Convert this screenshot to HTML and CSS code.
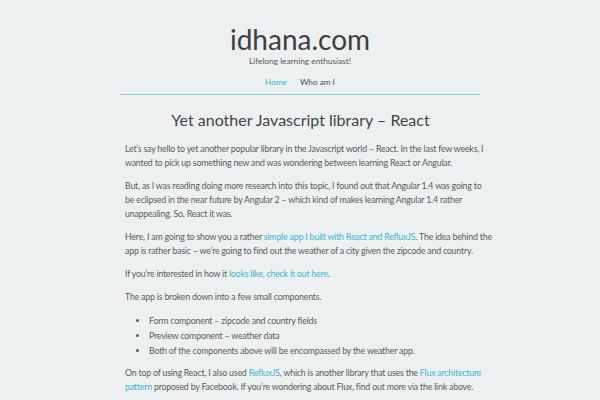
FILE: index.html
```html
<!DOCTYPE html>
<html>
<head>
<meta charset="utf-8">
<link rel="stylesheet" href="styles.css">
</head>
<body>
<div class="page">
  <header class="site-header">
    <h1 class="site-title">idhana.com</h1>
    <p class="tagline">Lifelong learning enthusiast!</p>
    <nav class="nav">
      <a class="nav-item active" href="#">Home</a>
      <a class="nav-item" href="#">Who am I</a>
    </nav>
  </header>
  <article class="post">
    <h2 class="post-title">Yet another Javascript library – React</h2>
    <p>Let’s say hello to yet another popular library in the Javascript world – React. In the last few weeks, I<br>wanted to pick up something new and was wondering between learning React or Angular.</p>
    <p>But, as I was reading doing more research into this topic, I found out that Angular 1.4 was going to<br>be eclipsed in the near future by Angular 2 – which kind of makes learning Angular 1.4 rather<br>unappealing. So, React it was.</p>
    <p>Here, I am going to show you a rather <a href="#">simple app I built with React and RefluxJS</a>. The idea behind the<br>app is rather basic – we’re going to find out the weather of a city given the zipcode and country.</p>
    <p>If you’re interested in how it <a href="#">looks like, check it out here</a>.</p>
    <p>The app is broken down into a few small components.</p>
    <ul>
      <li>Form component – zipcode and country fields</li>
      <li>Preview component – weather data</li>
      <li>Both of the components above will be encompassed by the weather app.</li>
    </ul>
    <p>On top of using React, I also used <a href="#">RefluxJS</a>, which is another library that uses the <a href="#">Flux architecture<br>pattern</a> proposed by Facebook. If you’re wondering about Flux, find out more via the link above.</p>
  </article>
</div>
</body>
</html>
```
FILE: styles.css
```css
html, body {
  margin: 0;
  padding: 0;
  background: #edf0f1;
}
body {
  font-family: Lato, "Noto Sans", sans-serif;
  color: #5a5a5a;
}
.page {
  width: 360px;
  margin: 0 auto;
}
.site-header {
  text-align: center;
  padding-top: 22px;
  border-bottom: 1px solid #8fcbd3;
  padding-bottom: 6px;
}
.site-title {
  margin: 0;
  font-weight: 400;
  font-size: 28px;
  line-height: 34px;
  color: #3e3e3e;
}
.tagline {
  margin: 0;
  font-size: 8.3px;
  line-height: 11px;
  color: #555;
}
.nav {
  display: flex;
  justify-content: center;
  gap: 13px;
  margin-top: 9px;
  font-size: 8.2px;
  line-height: 12px;
}
.nav-item {
  color: #4a4a4a;
  text-decoration: none;
}
.nav-item.active {
  color: #3bb6c9;
}
.post {
  padding: 0 4px 0 5px;
}
.post-title {
  margin: 14px 0 11px;
  text-align: center;
  font-weight: 400;
  font-size: 16px;
  line-height: 22px;
  color: #444;
}
.post p, .post li {
  font-size: 8.8px;
  letter-spacing: -0.2px;
  line-height: 14px;
}
.post p {
  margin: 0 0 9px;
  white-space: nowrap;
}
.post ul {
  margin: 0 0 8px;
  padding-left: 24px;
}
.post li {
  line-height: 15px;
}
.post a {
  color: #3bb6c9;
  text-decoration: none;
}
```
